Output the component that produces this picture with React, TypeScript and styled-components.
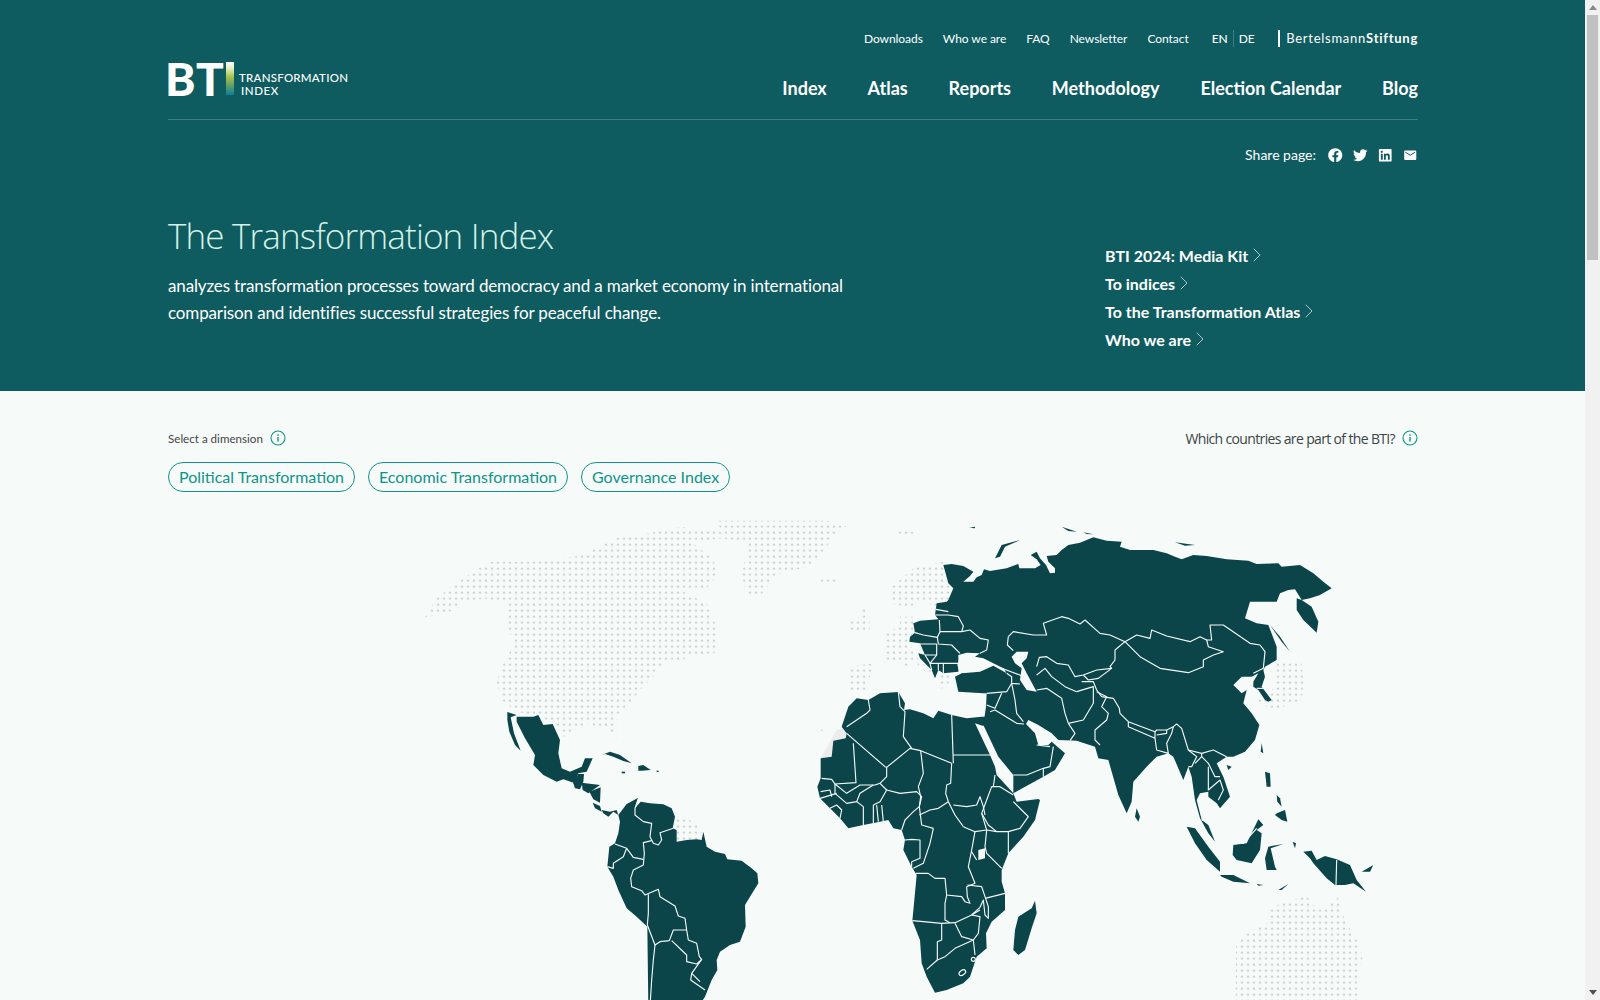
import { ChevronRight } from "lucide-react";
import { FaFacebook, FaLinkedin, FaTwitter } from "react-icons/fa";
import { MdEmail } from "react-icons/md";
import styled, { createGlobalStyle } from "styled-components";

const GlobalStyle = createGlobalStyle`
  html, body {
    margin: 0;
    padding: 0;
    background: #f6fbfa;
    font-family: Lato, "Liberation Sans", sans-serif;
  }
  * { box-sizing: border-box; }
`;

const Page = styled.div`
  min-height: 3960px;
`;

const Hero = styled.header`
  height: 391px;
  background: #0e5b60;
  color: #fff;
`;

const Inner = styled.div`
  width: 1250px;
  margin-left: 168px;
`;

const TopBar = styled.nav`
  height: 62px;
  padding-top: 30px;
  display: flex;
  justify-content: flex-end;
  align-items: flex-start;
  font-size: 12px;
  line-height: 17px;
  letter-spacing: -0.05px;
  gap: 20px;
`;

const Lang = styled.div`
  display: flex;
  margin-left: 3px;
  span:first-child {
    padding-right: 5px;
    border-right: 1px solid #3f7f83;
    font-weight: 500;
  }
  span:last-child {
    padding-left: 5px;
  }
`;

const Bertelsmann = styled.div`
  margin-left: 3px;
  padding-left: 6.5px;
  border-left: 2px solid #fff;
  font-size: 13px;
  letter-spacing: 0.74px;
  white-space: nowrap;
  b {
    font-weight: 700;
  }
`;

const MainRow = styled.div`
  height: 58px;
  display: flex;
  justify-content: space-between;
  border-bottom: 1px solid #3f7f83;
`;

const Logo = styled.div`
  display: flex;
  height: 33px;
  align-items: stretch;
`;

const LogoMark = styled.span`
  font-size: 46px;
  font-weight: 900;
  line-height: 33px;
  letter-spacing: 0.6px;
  width: 58px;
  margin-left: -3px;
  margin-right: 3px;
`;

const LogoBar = styled.span`
  width: 8px;
  background: linear-gradient(#fff 0%, #e9efc9 18%, #a7c14a 45%, #5f9e6a 72%, #0b7f96 100%);
`;

const LogoText = styled.span`
  margin-left: 5px;
  padding-top: 9px;
  font-size: 11.5px;
  line-height: 13px;
  font-weight: 500;
  letter-spacing: 0.25px;
  span {
    display: block;
  }
  span + span {
    margin-left: 2px;
    letter-spacing: 0.6px;
  }
`;

const MainNav = styled.nav`
  display: flex;
  gap: 40.8px;
  font-size: 18px;
  font-weight: 700;
  line-height: 24px;
  padding-top: 14px;
`;

const ShareRow = styled.div`
  height: 91px;
  padding-top: 26px;
  display: flex;
  justify-content: flex-end;
  gap: 10px;
  align-items: flex-start;
  font-size: 14px;
  line-height: 18px;
`;

const ShareLabel = styled.span`
  margin-right: 2px;
`;

const ShareIcon = styled.span`
  width: 15px;
  height: 18px;
  display: flex;
  align-items: center;
  justify-content: center;
  font-size: 14.5px;
`;

const HeroBody = styled.div`
  display: flex;
  justify-content: space-between;
`;

const Intro = styled.div`
  width: 700px;
`;

const Title = styled.h1`
  margin: 0 0 11px;
  font-family: "Open Sans", sans-serif;
  font-size: 35px;
  font-weight: 300;
  line-height: 50px;
  letter-spacing: -0.85px;
  color: #d4f1e6;
`;

const Lead = styled.p`
  margin: 0;
  font-size: 17px;
  line-height: 27px;
  letter-spacing: -0.14px;
`;

const QuickLinks = styled.ul`
  list-style: none;
  margin: 30px 0 0;
  padding: 0;
  width: 313px;
`;

const QuickLink = styled.li`
  height: 28px;
  display: flex;
  align-items: center;
  font-size: 16px;
  font-weight: 700;
  svg {
    margin-left: -3px;
    color: #a9c8c7;
  }
`;

const Content = styled.main`
  padding-top: 37px;
`;

const LabelRow = styled.div`
  display: flex;
  justify-content: space-between;
  height: 20px;
  align-items: center;
`;

const Label = styled.div`
  display: flex;
  align-items: center;
  gap: 7px;
  font-size: 11.6px;
  color: #444;
`;

const QuestionLabel = styled(Label)`
  font-family: "Open Sans", sans-serif;
  font-size: 14px;
  letter-spacing: -0.65px;
  color: #3c4444;
`;

const Pills = styled.div`
  display: flex;
  gap: 13px;
  margin-top: 14px;
`;

const Pill = styled.button`
  height: 30px;
  padding: 0 10px 1px;
  border: 1px solid #0f9488;
  border-radius: 15px;
  background: transparent;
  color: #0f9488;
  font-family: inherit;
  font-size: 16px;
  line-height: 27px;
`;

const WorldMap = styled.svg`
  display: block;
  margin-top: 18px;
  width: 1250px;
  height: 560px;
`;

/* the page is long, the browser's own bar is hidden in the headless window */
const ScrollBar = styled.div`
  position: fixed;
  top: 0;
  right: 0;
  bottom: 0;
  width: 15px;
  background: #f1f1f1;
`;

const ScrollArrow = styled.span<{ $down?: boolean }>`
  position: absolute;
  left: 3.5px;
  width: 0;
  height: 0;
  border-left: 4px solid transparent;
  border-right: 4px solid transparent;
  ${(p) => (p.$down ? "bottom: 5px; border-top: 5px solid #505050;" : "top: 5px; border-bottom: 5px solid #8a8a8a;")}
`;

const ScrollThumb = styled.span`
  position: absolute;
  top: 15px;
  left: 2px;
  width: 11px;
  height: 245px;
  background: #c1c1c1;
`;

function InfoIcon() {
  return (
    <svg width="16" height="16" viewBox="0 0 16 16" fill="none" stroke="#0f9488">
      <circle cx="8" cy="8" r="7" strokeWidth="1.1" />
      <path d="M8 7v4.6" strokeWidth="1.4" />
      <path d="M8 4.2v1.5" strokeWidth="1.4" />
    </svg>
  );
}

/* dotted land, not part of the index */
const dotted = [
  "75,350 110,295 180,240 270,185 400,185 560,165 575,150 650,115 770,95 845,80 965,95 965,115 880,130 940,180 955,225 920,265 840,270 920,310 950,380 955,455 880,470 790,490 760,530 720,570 680,620 650,650 650,725 630,690 560,670 490,710 460,670 420,650 350,635 305,600 290,545 305,500 325,470 340,420 320,380 325,310 250,295 180,310 150,335 90,350",
  "950,62 1280,62 1340,78 1295,115 1270,160 1220,200 1130,225 1100,262 1075,295 1040,280 1025,225 1040,160 1040,125 965,115 965,95",
  "1250,230 1315,230 1315,245 1255,245",
  "825,950 885,965 905,995 905,1018 830,1022",
  // europe
  "1540,205 1630,185 1640,240 1658,270 1645,300 1605,325 1575,300 1530,320 1470,310 1470,265 1500,240",
  "1450,400 1500,380 1500,350 1540,350 1540,395 1525,425 1540,450 1555,480 1590,510 1605,535 1570,510 1540,480 1520,500 1505,490 1450,490",
  "1345,500 1420,490 1400,570 1360,585 1345,560",
  "1380,310 1405,330 1410,395 1350,400 1345,365 1380,350",
  "1620,520 1655,525 1640,565 1610,565",
  "1488,95 1550,95 1525,115",
  "1250,686 1275,686 1275,692 1250,692",
  // japan
  "2565,600 2590,595 2625,560 2625,490 2705,490 2710,550 2705,600 2650,620 2620,630",
  // australia
  "2615,1220 2720,1188 2740,1215 2780,1225 2812,1188 2835,1260 2870,1320 2888,1370 2870,1450 2880,1710 2505,1710 2508,1340 2540,1300 2600,1270",
];

/* filled land in the first crop's coordinates */
const americas = [
  // mexico
  "350,650 400,650 415,645 430,675 458,672 480,720 475,760 485,805 510,815 545,800 555,775 578,775 560,815 535,820 525,850 490,838 470,845 430,825 400,795 405,765 375,715 350,665",
  "322,636 350,645 332,652 342,700 362,752 345,735 328,695 322,660",
  // central america
  "520,850 535,822 552,822 550,845 540,868 525,865",
  "545,848 600,855 565,880 548,870",
  "568,875 602,862 600,908 580,898",
  "578,908 600,918 605,935 585,925",
  "605,930 630,935 650,930 655,945 640,935 625,950 610,940",
  // caribbean
  "605,765 630,755 660,765 695,790 670,783 640,770 615,762",
  "715,798 730,795 752,810 725,812 715,812",
  "665,815 675,815 675,820 665,820",
  "770,812 776,812 776,816 770,816",
  // south america
  "655,945 680,912 715,893 705,925 722,905 750,910 790,913 815,925 825,950 818,985 830,990 830,1025 860,1020 890,1018 905,1020 910,995 920,1040 945,1055 975,1062 982,1078 1025,1082 1055,1105 1072,1120 1075,1150 1050,1190 1035,1215 1037,1280 1020,1325 990,1335 960,1355 950,1380 952,1410 935,1440 915,1490 895,1520 860,1560 850,1600 830,1710 745,1710 745,1520 742,1280 710,1250 680,1225 655,1170 640,1130 622,1100 628,1040 645,1030 655,1000 660,965",
];

const americaBorders = [
  "715,895 705,925 705,945 730,965 755,970 750,1010 760,1030 775,1035 785,1020 780,998 820,985",
  "755,1022 730,1028 733,1060 730,1095 700,1110 692,1135 695,1160 725,1172 735,1185 775,1168 780,1190 825,1218 835,1248 855,1255 860,1290 865,1320 890,1330 898,1370 905,1378 875,1420 900,1445",
  "645,1032 680,1045 700,1072 730,1078",
  "680,1045 670,1070 640,1090 640,1105 622,1100",
  "745,1183 745,1240 742,1275 765,1335 780,1325 808,1322 820,1290 860,1290",
  "815,1322 860,1365 860,1385 890,1392 905,1378",
  "765,1335 760,1380 755,1440 750,1520 755,1600 760,1710",
  "875,1420 872,1440 915,1470",
];

/* second crop's coordinates, moved by 1440 in the group */
const eastLand = [
  // africa
  "-115,680 -95,620 -70,595 -35,600 0,580 55,576 75,610 72,630 90,628 130,640 160,655 175,632 215,645 260,655 305,650 315,650 315,670 310,678 285,670 330,765 345,800 350,825 400,880 410,905 475,897 480,900 465,960 430,1010 385,1060 365,1110 365,1145 375,1180 375,1230 335,1265 318,1300 320,1345 290,1370 270,1430 250,1450 200,1470 165,1478 140,1430 125,1390 120,1320 97,1262 103,1200 110,1125 95,1100 70,1050 75,1020 65,990 40,985 25,960 0,965 -50,975 -95,985 -120,955 -150,925 -180,895 -188,860 -178,835 -178,775 -145,770 -140,722 -103,715 -100,700",
  // madagascar
  "465,1202 470,1240 455,1285 435,1350 415,1365 400,1350 405,1290 415,1250 455,1225",
  // eurasia
  "190,195 215,192 250,198 280,215 270,228 250,245 280,245 290,232 305,225 312,208 330,213 380,205 415,192 418,205 465,205 482,195 470,178 452,165 470,155 480,175 498,195 510,220 525,218 525,205 505,185 500,168 530,165 545,150 565,135 600,128 640,112 680,122 725,125 720,140 750,150 820,150 860,160 885,170 905,178 940,165 980,168 1040,178 1105,182 1130,192 1195,190 1205,200 1260,195 1300,220 1330,245 1355,265 1320,285 1290,295 1265,300 1245,268 1225,270 1200,280 1190,305 1110,305 1095,355 1130,370 1165,375 1190,440 1190,480 1155,500 1150,510 1155,530 1145,560 1175,600 1165,605 1155,600 1135,570 1120,560 1120,545 1135,520 1115,530 1085,530 1060,555 1085,580 1100,570 1090,610 1115,640 1138,675 1125,720 1095,755 1060,770 1040,770 1010,790 1030,830 1050,890 1020,925 1010,910 985,890 985,875 960,880 950,900 965,960 985,975 1005,1025 985,1000 960,955 945,900 935,830 925,800 910,840 880,770 865,760 830,770 800,800 760,845 755,905 740,940 715,885 685,780 655,775 645,740 590,722 535,720 515,700 475,675 445,660 438,672 465,700 475,735 505,735 515,725 555,760 525,810 490,830 400,880 400,825 355,770 310,675 318,620 320,580 310,580 235,575 225,530 245,520 300,515 340,497 380,520 370,505 340,490 310,475 285,470 300,460 260,458 235,465 235,515 190,520 175,510 165,535 155,510 120,475 115,460 135,465 120,430 88,425 90,410 105,398 100,370 120,362 175,358 165,345 170,310 200,305 205,300 220,265 205,250",
  // islands of asia
  "1265,300 1295,320 1315,365 1310,398 1270,360 1250,330 1250,295",
  "1170,375 1200,410 1230,455 1205,425",
  "345,175 365,135 420,120 375,140 360,170",
  "545,80 590,95 565,93",
  "610,97 640,103 620,102",
  "885,127 945,135 915,137",
  "268,83 285,80 285,85",
  "1040,795 1055,800 1045,810",
  "1145,730 1150,760 1142,755",
  "770,925 780,950 775,965 765,950",
  "1155,815 1170,820 1172,860 1160,860",
  "1190,885 1200,895 1205,920 1192,905",
  "1190,940 1215,930 1222,965 1205,960 1185,945",
  "1135,958 1150,975 1130,990 1145,1000 1140,1050 1115,1090 1070,1080 1058,1065 1060,1035 1100,1030",
  "920,980 945,985 985,1040 1020,1085 1020,1115 980,1080 945,1030",
  "1020,1125 1060,1125 1110,1150 1060,1145 1025,1130",
  "1165,1040 1210,1032 1172,1045 1185,1100 1190,1110 1160,1110 1155,1075",
  "1130,1152 1150,1155 1135,1157",
  "1195,1170 1225,1152 1205,1170",
  "1238,1025 1248,1030 1245,1045",
  "1270,1055 1295,1052 1310,1080 1335,1068 1370,1078 1410,1095 1430,1140 1458,1175 1420,1150 1395,1155 1365,1155 1340,1135 1300,1090 1290,1075",
  "1445,1115 1480,1095 1470,1115",
];

const seas = [
  // caspian
  "395,470 410,455 445,455 440,475 425,490 440,520 470,575 440,570 420,540 425,505 405,490",
  // black sea is partly in the outline, the rest is closed here
  "240,470 262,462 285,478 300,495 335,497 300,510 240,520 232,495",
  // lake victoria
  "295,1050 315,1045 315,1075 295,1080",
];

const eastBorders = [
  // north and west africa
  "-100,680 -40,640 -30,630 -35,600",
  "-100,700 15,800 20,802 90,745 122,752 215,790",
  "55,576 60,620 75,635 70,710 95,745",
  "-80,730 -72,848 -135,852 -145,838 -175,835",
  "20,802 20,830 0,850 -15,855 -60,855 -100,880 -135,852",
  "-135,852 -135,880 -100,910 -70,905 -60,880 -20,855",
  "-70,905 -50,920 -50,975",
  "-20,915 -20,970",
  "-10,915 -5,965",
  "5,915 10,965",
  "-180,895 -130,880",
  "-178,875 -150,870 -145,890",
  "-150,925 -130,915 -115,930 -120,955",
  "20,870 60,880 110,875 125,890 118,920 100,935 75,960 65,990",
  "-20,915 0,905 20,870 0,850",
  "122,752 130,820 115,860 122,890 118,920 125,975 160,985",
  "215,790 212,850 200,855 197,880 205,905 225,945 250,980",
  "118,945 150,930 175,925 205,905",
  "215,645 220,790",
  "220,765 330,765",
  "220,915 260,920 290,915 300,890 310,920 315,945",
  "250,980 285,995 320,990 305,940 320,900 335,860 360,860 400,885",
  "345,825 340,860",
  "400,905 440,945 445,950 420,985 385,995 350,995 325,975 305,940",
  "385,995 385,1060",
  "320,990 350,995",
  "320,990 315,1040 320,1060 365,1105",
  "285,995 275,1050 265,1100 285,1150 260,1160 262,1190 270,1210 255,1205 245,1190 200,1185 195,1135 165,1135 145,1120 108,1120",
  "290,1080 275,1055",
  "160,985 150,1030 130,1090 100,1105",
  "75,1020 95,1018 120,1020 120,1075 95,1085 95,1100",
  "200,1185 195,1210 195,1260 210,1268",
  "97,1262 130,1265 185,1270 225,1268 275,1245 300,1230",
  "262,1155 305,1160 325,1220 325,1255 315,1245 310,1200 300,1222 275,1245",
  "315,1195 375,1180",
  "275,1245 300,1250 295,1300 280,1320 245,1310 225,1270",
  "185,1272 185,1320 172,1325 172,1380 195,1370 225,1345 280,1320 285,1365",
  "172,1380 140,1408",
  // europe
  "168,328 205,335",
  "165,345 205,345 235,350 250,378 245,395 180,395 178,360",
  "180,395 172,412 175,432 215,435 240,460",
  "245,395 270,390 300,415 325,420 320,450 300,460",
  "105,398 130,405 172,412",
  "120,432 170,432 170,465 135,465",
  "170,465 150,490 190,490 235,490",
  "135,465 150,490 155,510",
  "175,490 175,510",
  "190,490 190,520",
  // caucasus and middle east
  "365,505 420,525 440,545",
  "380,520 395,530 395,550 420,552",
  "395,550 405,600 410,640 430,665",
  "320,580 380,575 395,550",
  "320,615 345,625 365,580",
  "330,635 345,630 410,670 432,672",
  "400,825 440,825 490,805 510,800 515,770 520,740",
  "490,830 490,805",
  "470,735 510,740",
  // central asia
  "385,410 400,395 460,405 500,405 490,370 545,350 565,355 600,372 615,360 660,400 690,405 735,425",
  "385,410 382,435 400,452",
  "470,500 478,472 500,470 530,490 565,495 585,530 610,525 650,510 695,505 655,535 625,540 610,525",
  "470,525 495,505 515,530 555,560 590,575",
  "470,570 500,565 545,595 555,640 565,670 610,660 640,610 640,560 590,575",
  "605,545 640,545 650,570",
  "735,425 705,450 705,480 690,500 695,505",
  "565,670 585,700 570,722",
  "650,575 680,590 665,620 685,640 680,660 645,690 645,720 660,735",
  // china and its neighbours
  "650,570 665,590 700,595 718,625 720,640 745,665 825,695 830,690 860,690 880,680 890,672 905,685 925,750 965,760 1000,750 1040,770",
  "745,665 745,680 825,715 825,695",
  "830,705 860,700 860,690",
  "825,715 830,750 865,760 860,730 875,700 880,680",
  "925,750 950,770 935,800 925,800",
  "965,760 965,770 985,790 1005,830 1020,830",
  "945,790 965,770",
  "985,800 985,870 1020,840 1030,870 1015,900",
  "965,960 985,965",
  "735,425 770,405 810,415 815,390 860,408 930,425 960,410 980,420 985,440 1030,455 1000,465 970,480 970,500 925,518 840,505 780,470 735,425",
  "980,420 995,420 990,375 1030,375 1110,430 1140,435 1155,455 1150,505 1120,520",
  "1130,565 1160,565",
  // islands
  "1065,1025 1090,1030 1130,985",
  "1370,1080 1368,1155",
];

const Map = () => (
  <WorldMap viewBox="-696 30 3750 1680" aria-hidden="true">
    <defs>
      <pattern id="dots" width="18" height="18" patternUnits="userSpaceOnUse" x="2" y="4">
        <circle cx="4" cy="4" r="2.6" fill="#a6adad" />
      </pattern>
    </defs>
    {dotted.map((points) => (
      <polygon key={points} points={points} fill="url(#dots)" />
    ))}
    <polygon points="1262,775 1290,725 1310,690 1340,682 1337,715 1300,722 1295,770" fill="#ececec" />
    <g fill="#0b454a">
      {americas.map((points) => (
        <polygon key={points} points={points} />
      ))}
    </g>
    <g fill="none" stroke="#f6fbfa" strokeWidth="3.4" strokeLinejoin="round">
      {americaBorders.map((points) => (
        <polyline key={points} points={points} />
      ))}
    </g>
    <g transform="translate(1440 0)">
      <g fill="#0b454a">
        {eastLand.map((points) => (
          <polygon key={points} points={points} />
        ))}
      </g>
      <g fill="#f6fbfa">
        {seas.map((points) => (
          <polygon key={points} points={points} />
        ))}
      </g>
      <g fill="none" stroke="#f6fbfa" strokeWidth="3.4" strokeLinejoin="round">
        {eastBorders.map((points) => (
          <polyline key={points} points={points} />
        ))}
        <ellipse cx="247" cy="1418" rx="11" ry="7" transform="rotate(-35 247 1418)" />
        <circle cx="280" cy="1378" r="6" />
      </g>
    </g>
  </WorldMap>
);

const quickLinks = ["BTI 2024: Media Kit", "To indices", "To the Transformation Atlas", "Who we are"];
const dimensions = ["Political Transformation", "Economic Transformation", "Governance Index"];

export default function App() {
  return (
    <Page>
      <GlobalStyle />
      <Hero>
        <Inner>
          <TopBar>
            <span>Downloads</span>
            <span>Who we are</span>
            <span>FAQ</span>
            <span>Newsletter</span>
            <span>Contact</span>
            <Lang>
              <span>EN</span>
              <span>DE</span>
            </Lang>
            <Bertelsmann>
              Bertelsmann<b>Stiftung</b>
            </Bertelsmann>
          </TopBar>
          <MainRow>
            <Logo>
              <LogoMark>BT</LogoMark>
              <LogoBar />
              <LogoText>
                <span>TRANSFORMATION</span>
                <span>INDEX</span>
              </LogoText>
            </Logo>
            <MainNav>
              <span>Index</span>
              <span>Atlas</span>
              <span>Reports</span>
              <span>Methodology</span>
              <span>Election Calendar</span>
              <span>Blog</span>
            </MainNav>
          </MainRow>
          <ShareRow>
            <ShareLabel>Share page:</ShareLabel>
            <ShareIcon>
              <FaFacebook />
            </ShareIcon>
            <ShareIcon>
              <FaTwitter />
            </ShareIcon>
            <ShareIcon>
              <FaLinkedin />
            </ShareIcon>
            <ShareIcon>
              <MdEmail />
            </ShareIcon>
          </ShareRow>
          <HeroBody>
            <Intro>
              <Title>The Transformation Index</Title>
              <Lead>
                analyzes transformation processes toward democracy and a market economy in international comparison and
                identifies successful strategies for peaceful change.
              </Lead>
            </Intro>
            <QuickLinks>
              {quickLinks.map((link) => (
                <QuickLink key={link}>
                  {link}
                  <ChevronRight size={24} strokeWidth={1} />
                </QuickLink>
              ))}
            </QuickLinks>
          </HeroBody>
        </Inner>
      </Hero>
      <Content>
        <Inner>
          <LabelRow>
            <Label>
              Select a dimension
              <InfoIcon />
            </Label>
            <QuestionLabel>
              Which countries are part of the BTI?
              <InfoIcon />
            </QuestionLabel>
          </LabelRow>
          <Pills>
            {dimensions.map((dimension) => (
              <Pill key={dimension}>{dimension}</Pill>
            ))}
          </Pills>
          <Map />
        </Inner>
      </Content>
      <ScrollBar>
        <ScrollArrow />
        <ScrollThumb />
        <ScrollArrow $down />
      </ScrollBar>
    </Page>
  );
}
